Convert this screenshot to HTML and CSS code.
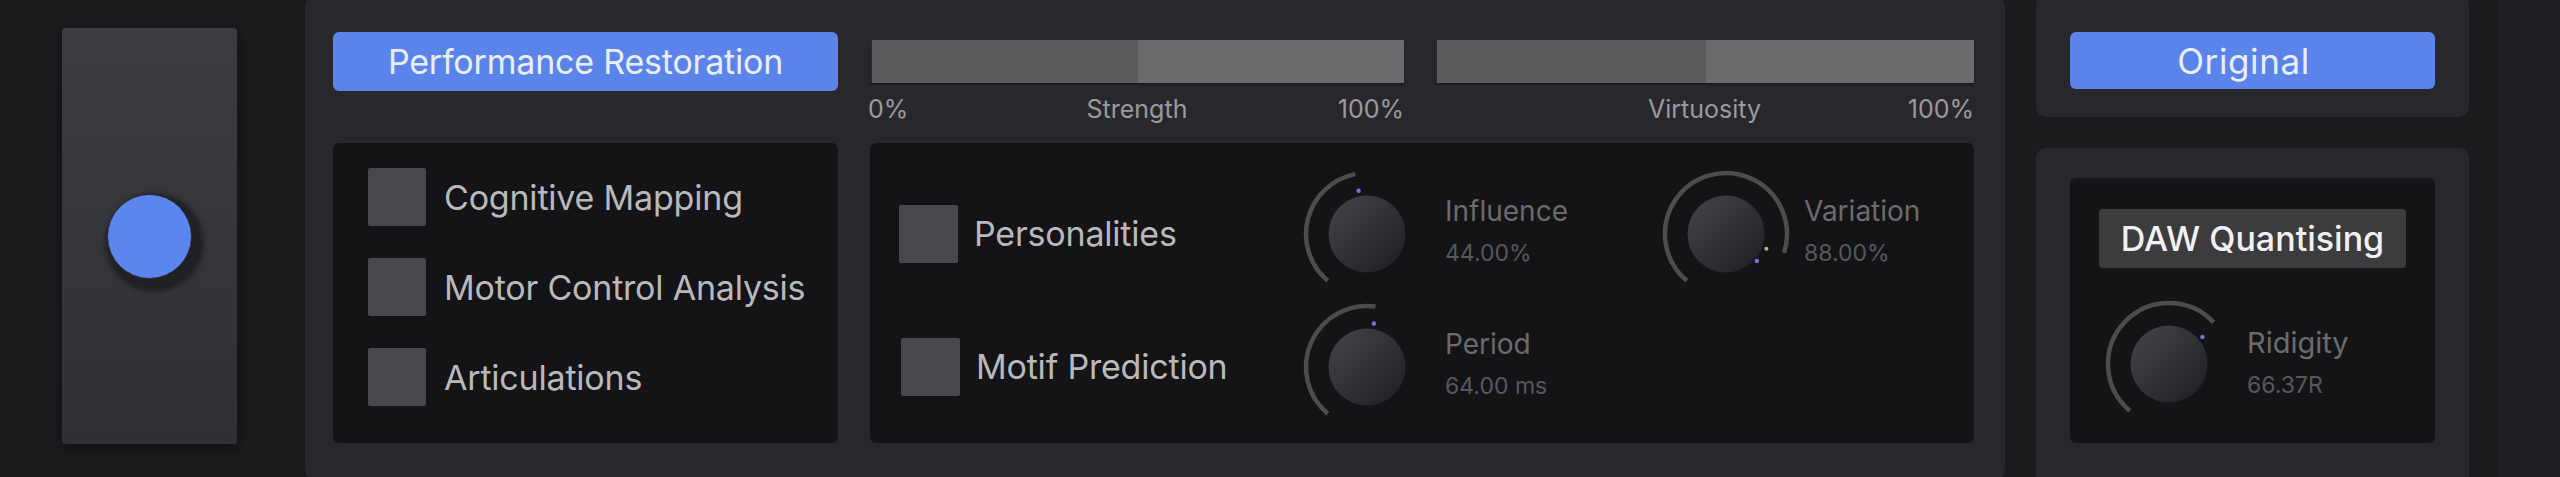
FILE: index.html
```html
<!DOCTYPE html>
<html lang="en">
<head>
<meta charset="utf-8">
<title>Performance Restoration</title>
<link rel="stylesheet" href="styles.css">
</head>
<body>
<div class="app">
  <div class="side">
    <div class="slider"><div class="thumb"></div></div>
  </div>

  <section class="main">
    <button class="btn-blue">Performance Restoration</button>

    <div class="bars">
      <div class="bar-group strength">
        <div class="bar"><div class="bar-lo"></div><div class="bar-hi"></div></div>
        <div class="bar-labels"><span class="l">0%</span><span class="c">Strength</span><span class="r">100%</span></div>
      </div>
      <div class="bar-group virtuosity">
        <div class="bar"><div class="bar-lo"></div><div class="bar-hi"></div></div>
        <div class="bar-labels"><span class="l"></span><span class="c">Virtuosity</span><span class="r">100%</span></div>
      </div>
    </div>

    <div class="box opts">
      <div class="opt"><span class="check"></span><span class="opt-label">Cognitive Mapping</span></div>
      <div class="opt"><span class="check"></span><span class="opt-label">Motor Control Analysis</span></div>
      <div class="opt"><span class="check"></span><span class="opt-label">Articulations</span></div>
    </div>

    <div class="box params">
      <div class="opt big"><span class="check"></span><span class="opt-label">Personalities</span></div>
      <div class="knob-group">
        <svg class="knob" viewBox="0 0 140 140" width="140" height="140">
          <defs>
            <linearGradient id="kg1" x1="0" y1="0" x2="1" y2="1">
              <stop offset="0" stop-color="#44454b"/><stop offset="1" stop-color="#1d1e22"/>
            </linearGradient>
          </defs>
          <path d="M30.79 116.73 A61 61 0 0 1 58.36 10.12" fill="none" stroke="#4d4d50" stroke-width="4.5"/>
          <circle cx="70" cy="70" r="38.5" fill="url(#kg1)"/>
          <circle cx="61.6" cy="26.8" r="2.2" fill="#7575e0"/>
        </svg>
        <div class="knob-text"><span class="k-label">Influence</span><span class="k-value">44.00%</span></div>
      </div>
      <div class="knob-group">
        <svg class="knob" viewBox="0 0 140 140" width="140" height="140">
          <defs>
            <linearGradient id="kg2" x1="0" y1="0" x2="1" y2="1">
              <stop offset="0" stop-color="#44454b"/><stop offset="1" stop-color="#1d1e22"/>
            </linearGradient>
          </defs>
          <path d="M30.79 116.73 A61 61 0 1 1 128.02 88.85" fill="none" stroke="#4d4d50" stroke-width="4.5"/>
          <circle cx="70" cy="70" r="38.5" fill="url(#kg2)"/>
          <circle cx="110.4" cy="84.7" r="2" fill="#b9b97a"/>
          <circle cx="100.9" cy="96.9" r="2.2" fill="#7575e0"/>
        </svg>
        <div class="knob-text"><span class="k-label">Variation</span><span class="k-value">88.00%</span></div>
      </div>

      <div class="opt big shift"><span class="check"></span><span class="opt-label">Motif Prediction</span></div>
      <div class="knob-group">
        <svg class="knob" viewBox="0 0 140 140" width="140" height="140">
          <defs>
            <linearGradient id="kg3" x1="0" y1="0" x2="1" y2="1">
              <stop offset="0" stop-color="#44454b"/><stop offset="1" stop-color="#1d1e22"/>
            </linearGradient>
          </defs>
          <path d="M30.79 116.73 A61 61 0 0 1 78.49 9.59" fill="none" stroke="#4d4d50" stroke-width="4.5"/>
          <circle cx="70" cy="70" r="38.5" fill="url(#kg3)"/>
          <circle cx="76.9" cy="26.5" r="2.2" fill="#7575e0"/>
        </svg>
        <div class="knob-text"><span class="k-label">Period</span><span class="k-value">64.00 ms</span></div>
      </div>
      <div></div>
    </div>
  </section>

  <div class="right">
    <div class="rpanel rtop">
      <button class="btn-blue small">Original</button>
    </div>
    <div class="rpanel rbottom">
      <div class="box quant">
        <div class="tag">DAW Quantising</div>
        <div class="knob-group">
          <svg class="knob" viewBox="0 0 140 140" width="140" height="140">
            <defs>
              <linearGradient id="kg4" x1="0" y1="0" x2="1" y2="1">
                <stop offset="0" stop-color="#44454b"/><stop offset="1" stop-color="#1d1e22"/>
              </linearGradient>
            </defs>
            <path d="M30.79 116.73 A61 61 0 1 1 114.61 28.40" fill="none" stroke="#4d4d50" stroke-width="4.5"/>
            <circle cx="70" cy="70" r="38.5" fill="url(#kg4)"/>
            <circle cx="103.4" cy="42.9" r="2.2" fill="#7575e0"/>
          </svg>
          <div class="knob-text"><span class="k-label wide">Ridigity</span><span class="k-value">66.37R</span></div>
        </div>
      </div>
    </div>
  </div>

  <div class="edge"></div>
</div>
</body>
</html>
```

FILE: styles.css
```css
* { box-sizing: border-box; }

html, body {
  margin: 0;
  padding: 0;
  background: #1b1b1e;
}

body {
  font-family: Inter, "Liberation Sans", sans-serif;
  width: 2560px;
  height: 477px;
  overflow: hidden;
}

.app {
  display: flex;
  align-items: flex-start;
  width: 2560px;
  height: 477px;
  overflow: hidden;
  background: #1b1b1e;
}

/* ---------- left slider ---------- */
.side {
  padding: 28px 0 0 62px;
  margin-right: 68px;
}

.slider {
  width: 175px;
  height: 416px;
  border-radius: 3px;
  background: linear-gradient(180deg, #3b3c42 0%, #35363c 50%, #2f3035 100%);
  box-shadow: 0 4px 14px rgba(0, 0, 0, 0.45);
  display: flex;
  align-items: center;
  justify-content: center;
}

.thumb {
  width: 85px;
  height: 85px;
  border-radius: 50%;
  background: #5b86ee;
  border: 1.5px solid #2a2b31;
  box-shadow: 5px 6px 4px 7px rgba(28, 29, 33, 0.8);
}

/* ---------- main panel ---------- */
.main {
  width: 1700px;
  height: 486px;
  margin-top: -5px;
  background: #28282c;
  border-radius: 12px;
  padding: 37px 31px 0 28px;
  display: grid;
  grid-template-columns: 505px 1104px;
  grid-template-rows: 59px 300px;
  column-gap: 32px;
  row-gap: 52px;
}

.btn-blue {
  border: none;
  margin: 0;
  padding: 0;
  background: #5a84ea;
  color: #e9eefb;
  font-family: Inter, "Liberation Sans", sans-serif;
  font-size: 34px;
  font-weight: 400;
  border-radius: 6px;
  height: 59px;
  width: 100%;
  letter-spacing: -0.2px;
}

/* bars */
.bars {
  display: flex;
  gap: 31px;
  padding-top: 8px;
}

.bar-group.strength { width: 534px; }
.bar-group.virtuosity { width: 539px; }

.bar {
  height: 43px;
  display: flex;
  box-shadow: 0 2px 2px rgba(0, 0, 0, 0.35);
  border-left: 2px solid #2a2a2c;
}

.bar-lo { flex: 1; background: #5a5a5c; }
.bar-hi { flex: 1; background: #6b6b6d; }

.bar-labels {
  display: grid;
  grid-template-columns: 1fr auto 1fr;
  margin-top: 11px;
  font-size: 25px;
  line-height: 30px;
  color: #9a9a9d;
}
.bar-labels .l { text-align: left; margin-left: -2px; }
.bar-labels .c { text-align: center; }
.bar-labels .r { text-align: right; }

/* dark boxes */
.box {
  background: #141417;
  border-radius: 6px;
}

.opts {
  padding: 25px 0 0 35px;
  display: flex;
  flex-direction: column;
  gap: 32px;
}

.opt {
  display: flex;
  align-items: center;
  gap: 18px;
  height: 58px;
}

.check {
  width: 58px;
  height: 58px;
  background: #47484e;
  border-radius: 2px;
  flex: none;
}

.opt-label {
  font-size: 34px;
  color: #b9b9bc;
  letter-spacing: -0.2px;
  white-space: nowrap;
}

.opt.big { gap: 16px; }
.opt.big .check { width: 59px; }
.opt.shift { margin-left: 2px; }

.params {
  padding: 24px 0 0 29px;
  display: grid;
  grid-template-columns: 398px 359px 1fr;
  grid-template-rows: 133px 133px;
  align-items: center;
}

/* knobs */
.knob-group {
  display: flex;
  align-items: center;
  gap: 8px;
}

.knob {
  display: block;
  flex: none;
  margin: -4px 0;
}

.knob-text {
  display: flex;
  flex-direction: column;
  gap: 12px;
  margin-bottom: 5px;
}

.k-label {
  font-size: 28px;
  line-height: 32px;
  color: #6b6b6e;
  white-space: nowrap;
}

.k-label.wide { font-size: 29px; }

.k-value {
  font-size: 23px;
  line-height: 28px;
  color: #58585c;
  white-space: nowrap;
}

/* ---------- right column ---------- */
.right {
  margin-left: 31px;
  width: 433px;
  display: flex;
  flex-direction: column;
  gap: 31px;
}

.rpanel {
  background: #28282c;
  border-radius: 10px;
  padding: 0 34px;
}

.rtop {
  margin-top: -5px;
  height: 122px;
  padding-top: 37px;
}

.btn-blue.small {
  height: 57px;
  font-size: 35px;
  letter-spacing: 0.6px;
  padding-right: 18px;
}

.rbottom {
  height: 340px;
  padding-top: 30px;
}

.quant {
  height: 265px;
  padding: 31px 29px 0;
}

.tag {
  height: 59px;
  background: #3c3c3f;
  border-radius: 4px;
  color: #f1f1f3;
  font-size: 34px;
  font-weight: 500;
  display: flex;
  align-items: center;
  justify-content: center;
  margin-bottom: 26px;
}

.quant .knob { margin: 0; }
.quant .knob-text { margin-bottom: 3px; }

/* ---------- far right edge ---------- */
.edge {
  margin-left: 28px;
  flex: 1;
  height: 477px;
  background: #1f1e22;
}
```
